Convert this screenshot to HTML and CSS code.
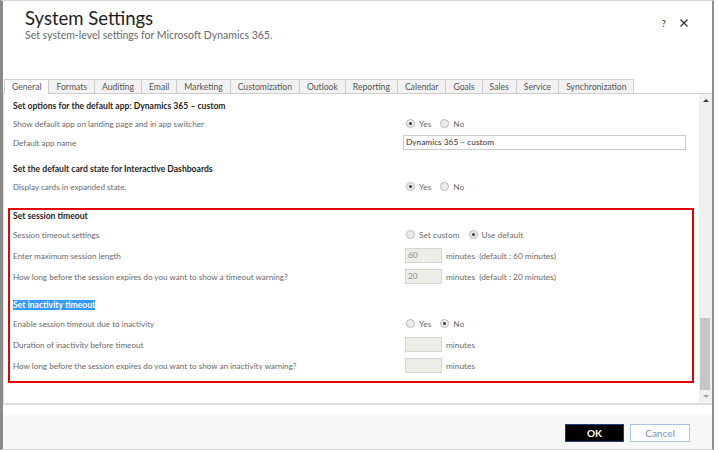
FILE: index.html
```html
<!DOCTYPE html>
<html lang="en">
<head>
<meta charset="utf-8">
<title>System Settings</title>
<link rel="stylesheet" href="styles.css">
</head>
<body>
<div class="dialog">
  <header class="header">
    <div class="titles">
      <h1 class="title">System Settings</h1>
      <p class="subtitle">Set system-level settings for Microsoft Dynamics 365.</p>
    </div>
    <div class="header-actions">
      <span class="help">?</span>
      <svg class="close" width="8" height="8" viewBox="0 0 8 8"><path d="M0.5 0.5 L7.5 7.5 M7.5 0.5 L0.5 7.5" stroke="#333" stroke-width="1.3" fill="none"/></svg>
    </div>
  </header>

  <nav class="tabs">
    <span class="tab active">General</span>
    <span class="tab">Formats</span>
    <span class="tab">Auditing</span>
    <span class="tab">Email</span>
    <span class="tab">Marketing</span>
    <span class="tab">Customization</span>
    <span class="tab">Outlook</span>
    <span class="tab">Reporting</span>
    <span class="tab">Calendar</span>
    <span class="tab">Goals</span>
    <span class="tab">Sales</span>
    <span class="tab">Service</span>
    <span class="tab">Synchronization</span>
  </nav>

  <div class="panel">
    <div class="panel-content">
      <div class="section-title first">Set options for the default app: Dynamics 365 – custom</div>
      <div class="row short">
        <div class="label">Show default app on landing page and in app switcher</div>
        <div class="control radios">
          <span class="opt"><span class="radio checked"></span>Yes</span>
          <span class="opt"><span class="radio"></span>No</span>
        </div>
      </div>
      <div class="row short">
        <div class="label">Default app name</div>
        <div class="control"><span class="text-input">Dynamics 365 – custom</span></div>
      </div>

      <div class="section-title second">Set the default card state for Interactive Dashboards</div>
      <div class="row short">
        <div class="label">Display cards in expanded state.</div>
        <div class="control radios">
          <span class="opt"><span class="radio checked"></span>Yes</span>
          <span class="opt"><span class="radio"></span>No</span>
        </div>
      </div>

      <div class="highlight-box">
        <div class="section-title boxed">Set session timeout</div>
        <div class="row">
          <div class="label">Session timeout settings</div>
          <div class="control radios">
            <span class="opt"><span class="radio"></span>Set custom</span>
            <span class="opt"><span class="radio checked"></span>Use default</span>
          </div>
        </div>
        <div class="row">
          <div class="label">Enter maximum session length</div>
          <div class="control"><span class="num-input">60</span><span class="unit">minutes&nbsp; (default : 60 minutes)</span></div>
        </div>
        <div class="row">
          <div class="label">How long before the session expires do you want to show a timeout warning?</div>
          <div class="control"><span class="num-input">20</span><span class="unit">minutes&nbsp; (default : 20 minutes)</span></div>
        </div>

        <div class="section-title inactivity"><span class="selected">Set inactivity timeout</span></div>
        <div class="row">
          <div class="label">Enable session timeout due to inactivity</div>
          <div class="control radios">
            <span class="opt"><span class="radio"></span>Yes</span>
            <span class="opt"><span class="radio checked"></span>No</span>
          </div>
        </div>
        <div class="row">
          <div class="label">Duration of inactivity before timeout</div>
          <div class="control"><span class="num-input"></span><span class="unit">minutes</span></div>
        </div>
        <div class="row">
          <div class="label">How long before the session expires do you want to show an inactivity warning?</div>
          <div class="control"><span class="num-input"></span><span class="unit">minutes</span></div>
        </div>
      </div>
    </div>
    <div class="scrollbar">
      <div class="arrow up"></div>
      <div class="track"><div class="thumb"></div></div>
      <div class="arrow down"></div>
    </div>
  </div>

  <footer class="footer">
    <div class="footer-bar">
      <button class="btn ok">OK</button>
      <button class="btn cancel">Cancel</button>
    </div>
  </footer>
</div>
</body>
</html>
```

FILE: styles.css
```css
* { box-sizing: border-box; }

html, body {
  margin: 0;
  padding: 0;
  background: #ffffff;
}

body {
  width: 718px;
  height: 450px;
  overflow: hidden;
  font-family: "Lato", "Open Sans", sans-serif;
}

.dialog {
  width: 714px;
  height: 450px;
  display: flex;
  flex-direction: column;
  border-left: 3px solid #8a8a8a;
  border-right: 2px solid #8f8f8f;
  border-top: 1px solid #dadada;
  border-bottom: 1px solid #d2d2d2;
  background: #fff;
}

/* Header */
.header {
  height: 78px;
  display: flex;
  justify-content: space-between;
  align-items: flex-start;
  padding: 6px 24px 0 22px;
}

.title {
  margin: 0;
  font-size: 18.5px;
  font-weight: 400;
  line-height: 1.2;
  color: #1e1e1e;
}

.subtitle {
  margin: 0;
  font-size: 10.5px;
  line-height: 1.2;
  color: #6a6a6a;
}

.header-actions {
  display: flex;
  align-items: center;
  gap: 14px;
  padding-top: 11px;
}

.help {
  font-size: 10px;
  color: #333;
  line-height: 10px;
}

.close { display: block; }

/* Tabs */
.tabs {
  height: 15px;
  display: flex;
  align-items: flex-start;
  border-bottom: 1px solid #cfcfcf;
  padding-left: 1px;
}

.tab {
  height: 14px;
  line-height: 14px;
  padding: 0 7px;
  font-size: 8.6px;
  color: #555;
  background: #f2f2f2;
  border-top: 1px solid #cfcfcf;
  border-right: 1px solid #cfcfcf;
  white-space: nowrap;
}

.tab.active {
  height: 15px;
  background: #fff;
  border-left: 1px solid #cfcfcf;
}

/* Panel */
.panel {
  height: 311px;
  display: flex;
  border-left: 1px solid #dedede;
  border-bottom: 2px solid #dddddd;
}

.panel-content {
  flex: 1;
  padding: 4px 5px 0 9px;
  font-size: 8.3px;
}

.section-title {
  height: 16px;
  line-height: 16px;
  font-size: 8.6px;
  font-weight: 700;
  color: #1f1f1f;
  white-space: nowrap;
}

.section-title.second { margin-top: 9px; }

.section-title.boxed {
  height: 12px;
  line-height: 12px;
  margin-bottom: 2px;
}

.section-title.inactivity { margin-top: 10px; }

.selected {
  background: #3399ff;
  color: #fff;
}

.row {
  height: 21px;
  display: grid;
  grid-template-columns: 390px 1fr;
  align-items: center;
}

.row.short { height: 19px; }

.label {
  color: #6a6a6a;
  white-space: nowrap;
  font-size: 8.1px;
}

.control {
  display: flex;
  align-items: center;
  color: #6a6a6a;
}

.radios {
  gap: 9px;
  padding-left: 3px;
}

.opt {
  display: flex;
  align-items: center;
  gap: 4px;
}

.radio {
  width: 9px;
  height: 9px;
  border-radius: 50%;
  border: 1px solid #b9b9b9;
  background: #ececec;
  display: flex;
  align-items: center;
  justify-content: center;
}

.radio.checked::after {
  content: "";
  width: 3px;
  height: 3px;
  border-radius: 50%;
  background: #3a3a3a;
}

.text-input {
  width: 283px;
  height: 15px;
  line-height: 13px;
  border: 1px solid #cccccc;
  padding-left: 2px;
  color: #333;
}

.num-input {
  width: 37px;
  height: 15px;
  line-height: 13px;
  margin-left: 2px;
  padding-left: 2px;
  border: 1px solid #d6d6d0;
  background: #ededE7;
  color: #8c8c8c;
}

.unit {
  margin-left: 4px;
}

.highlight-box {
  margin: 12px 0 0 -5px;
  border: 2px solid #e60000;
  padding: 0 0 5px 3px;
}

/* Scrollbar */
.scrollbar {
  width: 13px;
  display: flex;
  flex-direction: column;
  background: #f0f0f0;
}

.arrow {
  height: 13px;
  display: flex;
  align-items: center;
  justify-content: center;
}

.arrow.up::before {
  content: "";
  border-left: 3px solid transparent;
  border-right: 3px solid transparent;
  border-bottom: 3px solid #3c3c3c;
}

.arrow.down::before {
  content: "";
  border-left: 3px solid transparent;
  border-right: 3px solid transparent;
  border-top: 3px solid #a3a3a3;
}

.track {
  flex: 1;
  display: flex;
  flex-direction: column;
  justify-content: flex-end;
  padding: 0 2px 0 1px;
}

.thumb {
  height: 72px;
  background: #c6c6c6;
}

/* Footer */
.footer {
  flex: 1;
  padding-top: 10px;
}

.footer-bar {
  height: 100%;
  background: #f7f7f7;
  display: flex;
  justify-content: flex-end;
  align-items: flex-start;
  gap: 6px;
  padding: 9px 22px 0 0;
}

.btn {
  height: 18px;
  padding: 0;
  font-family: "Lato", "Open Sans", sans-serif;
  font-size: 10px;
  cursor: default;
}

.btn.ok {
  width: 59px;
  background: #000;
  color: #fff;
  border: 1px solid #1a3f7a;
  font-weight: 700;
}

.btn.cancel {
  width: 60px;
  background: #fff;
  color: #7292c6;
  border: 1px solid #aac3e8;
}
```
